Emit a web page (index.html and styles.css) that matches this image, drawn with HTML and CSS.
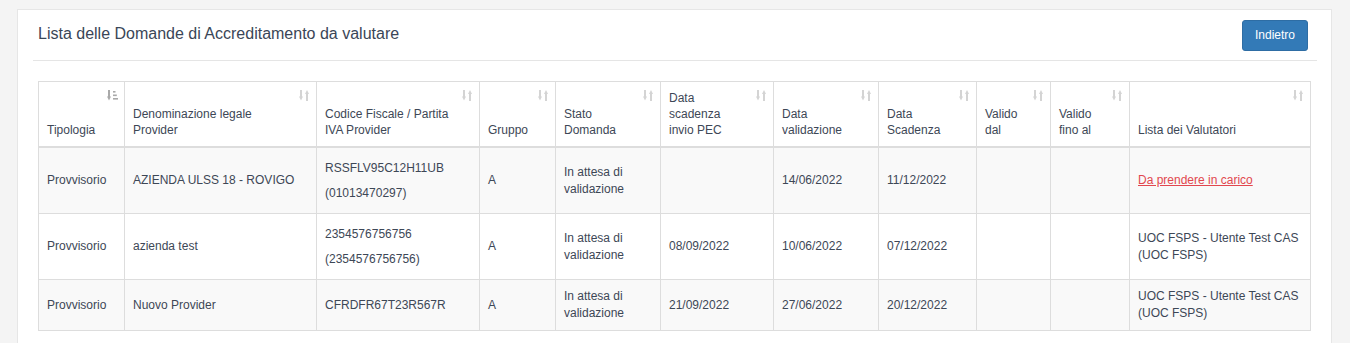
FILE: index.html
```html
<!DOCTYPE html>
<html lang="it">
<head>
<meta charset="utf-8">
<title>Lista delle Domande di Accreditamento da valutare</title>
<link rel="stylesheet" href="styles.css">
</head>
<body>
<div class="card">
  <div class="card-head">
    <h3 class="card-title">Lista delle Domande di Accreditamento da valutare</h3>
    <button class="btn-primary" type="button">Indietro</button>
  </div>
  <hr class="sep">
  <table class="grid">
    <colgroup>
      <col class="c1"><col class="c2"><col class="c3"><col class="c4"><col class="c5"><col class="c6"><col class="c7"><col class="c8"><col class="c9"><col class="c10"><col class="c11">
    </colgroup>
    <thead>
      <tr>
        <th>Tipologia<svg class="sort sorted" viewBox="0 0 11 11"><rect x="1" y="0" width="2" height="7"/><polygon points="0,6.5 4,6.5 2,10.5"/><rect x="6" y="1" width="2.5" height="1.6"/><rect x="6" y="4.5" width="3.8" height="1.6"/><rect x="6" y="8" width="5" height="1.6"/></svg></th>
        <th>Denominazione legale Provider<svg class="sort" viewBox="0 0 11 11"><rect x="1" y="0" width="2" height="7"/><polygon points="0,6.5 4,6.5 2,10.5"/><polygon points="6,4 10,4 8,0"/><rect x="7" y="3.5" width="2" height="7.5"/></svg></th>
        <th>Codice Fiscale / Partita IVA Provider<svg class="sort" viewBox="0 0 11 11"><rect x="1" y="0" width="2" height="7"/><polygon points="0,6.5 4,6.5 2,10.5"/><polygon points="6,4 10,4 8,0"/><rect x="7" y="3.5" width="2" height="7.5"/></svg></th>
        <th>Gruppo<svg class="sort" viewBox="0 0 11 11"><rect x="1" y="0" width="2" height="7"/><polygon points="0,6.5 4,6.5 2,10.5"/><polygon points="6,4 10,4 8,0"/><rect x="7" y="3.5" width="2" height="7.5"/></svg></th>
        <th>Stato Domanda<svg class="sort" viewBox="0 0 11 11"><rect x="1" y="0" width="2" height="7"/><polygon points="0,6.5 4,6.5 2,10.5"/><polygon points="6,4 10,4 8,0"/><rect x="7" y="3.5" width="2" height="7.5"/></svg></th>
        <th>Data scadenza invio PEC<svg class="sort" viewBox="0 0 11 11"><rect x="1" y="0" width="2" height="7"/><polygon points="0,6.5 4,6.5 2,10.5"/><polygon points="6,4 10,4 8,0"/><rect x="7" y="3.5" width="2" height="7.5"/></svg></th>
        <th>Data validazione<svg class="sort" viewBox="0 0 11 11"><rect x="1" y="0" width="2" height="7"/><polygon points="0,6.5 4,6.5 2,10.5"/><polygon points="6,4 10,4 8,0"/><rect x="7" y="3.5" width="2" height="7.5"/></svg></th>
        <th>Data Scadenza<svg class="sort" viewBox="0 0 11 11"><rect x="1" y="0" width="2" height="7"/><polygon points="0,6.5 4,6.5 2,10.5"/><polygon points="6,4 10,4 8,0"/><rect x="7" y="3.5" width="2" height="7.5"/></svg></th>
        <th>Valido dal<svg class="sort" viewBox="0 0 11 11"><rect x="1" y="0" width="2" height="7"/><polygon points="0,6.5 4,6.5 2,10.5"/><polygon points="6,4 10,4 8,0"/><rect x="7" y="3.5" width="2" height="7.5"/></svg></th>
        <th>Valido fino al<svg class="sort" viewBox="0 0 11 11"><rect x="1" y="0" width="2" height="7"/><polygon points="0,6.5 4,6.5 2,10.5"/><polygon points="6,4 10,4 8,0"/><rect x="7" y="3.5" width="2" height="7.5"/></svg></th>
        <th>Lista dei Valutatori<svg class="sort" viewBox="0 0 11 11"><rect x="1" y="0" width="2" height="7"/><polygon points="0,6.5 4,6.5 2,10.5"/><polygon points="6,4 10,4 8,0"/><rect x="7" y="3.5" width="2" height="7.5"/></svg></th>
      </tr>
    </thead>
    <tbody>
      <tr class="odd">
        <td>Provvisorio</td>
        <td>AZIENDA ULSS 18 - ROVIGO</td>
        <td class="code"><div>RSSFLV95C12H11UB</div><div>(01013470297)</div></td>
        <td>A</td>
        <td>In attesa di validazione</td>
        <td></td>
        <td>14/06/2022</td>
        <td>11/12/2022</td>
        <td></td>
        <td></td>
        <td><a class="alert-link" href="#">Da prendere in carico</a></td>
      </tr>
      <tr>
        <td>Provvisorio</td>
        <td>azienda test</td>
        <td class="code"><div>2354576756756</div><div>(2354576756756)</div></td>
        <td>A</td>
        <td>In attesa di validazione</td>
        <td>08/09/2022</td>
        <td>10/06/2022</td>
        <td>07/12/2022</td>
        <td></td>
        <td></td>
        <td>UOC FSPS - Utente Test CAS (UOC FSPS)</td>
      </tr>
      <tr class="odd">
        <td>Provvisorio</td>
        <td>Nuovo Provider</td>
        <td>CFRDFR67T23R567R</td>
        <td>A</td>
        <td>In attesa di validazione</td>
        <td>21/09/2022</td>
        <td>27/06/2022</td>
        <td>20/12/2022</td>
        <td></td>
        <td></td>
        <td>UOC FSPS - Utente Test CAS (UOC FSPS)</td>
      </tr>
    </tbody>
  </table>
</div>
</body>
</html>
```
FILE: styles.css
```css
* { box-sizing: border-box; }
html, body { height: 100%; }
body {
  margin: 0;
  background: #f4f4f4;
  font-family: "Liberation Sans", Arial, sans-serif;
  font-size: 12px;
  color: #3d4756;
  overflow: hidden;
}
.card {
  margin: 9px 0 0 17px;
  width: 1315px;
  min-height: 400px;
  background: #fff;
  border: 1px solid #e6e6e6;
}
.card-head {
  display: flex;
  justify-content: space-between;
  align-items: flex-start;
  padding: 10px 23px 0 20px;
}
.card-title {
  margin: 5px 0 0;
  font-size: 16px;
  font-weight: normal;
  line-height: 18px;
  color: #3a4657;
}
.btn-primary {
  font-family: "Liberation Sans", Arial, sans-serif;
  font-size: 12px;
  line-height: 17px;
  padding: 6px 12px;
  color: #fff;
  background: #337ab7;
  border: 1px solid #2e6da4;
  border-radius: 3px;
}
.sep {
  margin: 9px 14px 0 15px;
  border: 0;
  border-top: 1px solid #e5e5e5;
  height: 0;
}
.grid {
  margin: 20px 0 0 20px;
  width: 1273px;
  table-layout: fixed;
  border-collapse: separate;
  border-spacing: 0;
  border-top: 1px solid #ddd;
  border-left: 1px solid #ddd;
}
.c1 { width: 86px; }
.c2 { width: 192px; }
.c3 { width: 163px; }
.c4 { width: 76px; }
.c5 { width: 105px; }
.c6 { width: 113px; }
.c7 { width: 105px; }
.c8 { width: 98px; }
.c9 { width: 74px; }
.c10 { width: 79px; }
.c11 { width: 181px; }
.grid th, .grid td {
  border-right: 1px solid #ddd;
  border-bottom: 1px solid #ddd;
  text-align: left;
}
.grid th {
  position: relative;
  font-weight: normal;
  vertical-align: bottom;
  padding: 8px 30px 8px 8px;
  line-height: 16px;
  border-bottom-width: 2px;
}
.grid td {
  vertical-align: middle;
  padding: 8px;
  line-height: 17px;
}
.grid td.code { line-height: 24.5px; }
.grid tr.odd td { background: #f9f9f9; }
.sort {
  position: absolute;
  top: 8px;
  right: 6px;
  width: 11px;
  height: 11px;
  fill: #d4d4d4;
}
.sort.sorted { fill: #a9a9a9; }
.alert-link {
  color: #e2474e;
  text-decoration: underline;
}
```
